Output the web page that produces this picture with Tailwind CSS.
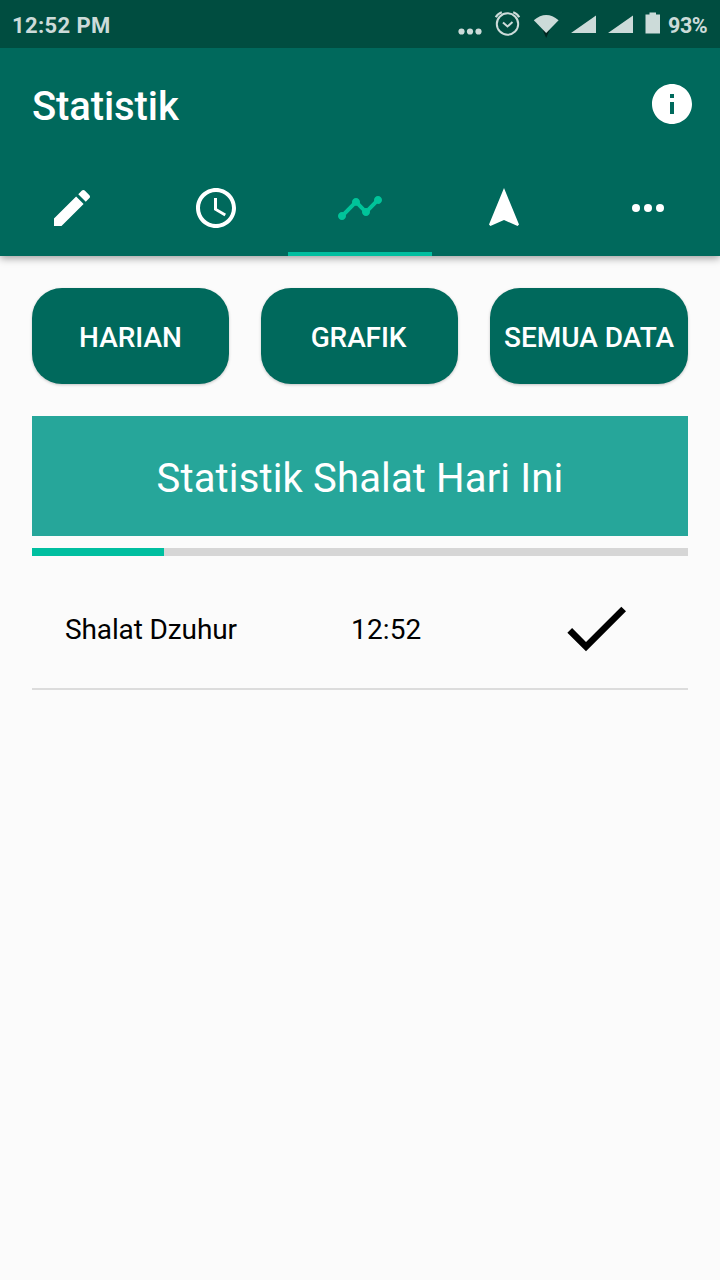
<!DOCTYPE html>
<html lang="id">
<head>
<meta charset="utf-8">
<title>Statistik</title>
<script src="https://cdn.jsdelivr.net/npm/@tailwindcss/browser@4"></script>
</head>
<body class="flex h-[1280px] w-[720px] flex-col overflow-hidden bg-[#fbfbfb] font-[Roboto,sans-serif] text-black">
  <header class="flex h-64 shrink-0 flex-col bg-[#00695c] text-white shadow-[0_2px_8px_rgba(0,0,0,0.4)]">
    <div class="flex h-12 items-center justify-between bg-[#004d40] pr-3 pl-3 text-[22px] text-[#ccdbd9]">
      <span class="pt-[3px] leading-none font-bold tracking-[0.38px]">12:52 PM</span>
      <div class="flex items-center">
        <svg class="h-12 w-[210px]" viewBox="456 0 210 48" fill="#ccdbd9">
          <circle cx="461.500" cy="31.500" r="3.100"/><circle cx="470" cy="31.500" r="3.100"/><circle cx="478.500" cy="31.500" r="3.100"/>
          <g fill="none" stroke="#ccdbd9">
            <circle cx="507.500" cy="24" r="10.700" stroke-width="2"/>
            <path d="M503 22.500l4.500 4 5-4.500" stroke-width="2"/>
            <path d="M495.800 17.200q1.800-3.600 6-5M519.200 17.200q-1.800-3.600-6-5" stroke-width="2.200"/>
          </g>
          <path d="M542.700 30h7l-3.500 8z" fill="#00261f"/>
          <path d="M533.800 20.300q12.400-10.600 24.800 0L546.200 33z"/>
          <path d="M571 33l25-17.500V33zM608 33l25-17.500V33z"/>
          <path d="M649.500 12.500h6.500v2h4v19h-14.500v-19h4z"/>
        </svg>
        <span class="w-[42px] pt-[3px] pl-0.5 text-[21.500px] leading-none font-bold tracking-[-0.4px]">93%</span>
      </div>
    </div>
    <div class="flex h-28 items-center justify-between pr-6 pl-8">
      <h1 class="pt-[5px] text-[40px] leading-none font-medium tracking-[-0.1px]">Statistik</h1>
      <svg class="size-12" viewBox="0 0 24 24" fill="currentColor"><path d="M12 2C6.480 2 2 6.480 2 12s4.480 10 10 10 10-4.480 10-10S17.520 2 12 2zm1 15h-2v-6h2v6zm0-8h-2V7h2v2z"/></svg>
    </div>
    <nav class="grid h-24 grid-cols-5">
      <div class="flex items-center justify-center"><svg class="size-12" viewBox="0 0 24 24" fill="currentColor"><path d="M3 17.250V21h3.750L17.810 9.940l-3.750-3.750L3 17.250zM20.710 7.040c.39-.39.39-1.020 0-1.410l-2.340-2.340c-.39-.39-1.020-.39-1.410 0l-1.830 1.830 3.750 3.750 1.830-1.830z"/></svg></div>
      <div class="flex items-center justify-center"><svg class="size-12" viewBox="0 0 24 24" fill="currentColor"><path d="M11.990 2C6.470 2 2 6.480 2 12s4.470 10 9.990 10C17.520 22 22 17.520 22 12S17.520 2 11.990 2zM12 20c-4.420 0-8-3.580-8-8s3.580-8 8-8 8 3.580 8 8-3.580 8-8 8zm.5-13H11v6l5.250 3.150.75-1.230-4.500-2.670z"/></svg></div>
      <div class="flex items-center justify-center border-b-4 border-[#00bfa0] pt-1 text-[#00c49a]"><svg class="size-12" viewBox="0 0 24 24" fill="currentColor"><path d="M23 8c0 1.100-.9 2-2 2-.18 0-.35-.02-.51-.07l-3.560 3.550c.05.16.07.34.07.52 0 1.100-.9 2-2 2s-2-.9-2-2c0-.18.02-.36.07-.52l-2.550-2.550c-.16.05-.34.07-.52.07s-.36-.02-.52-.07l-4.550 4.560c.05.16.07.33.07.51 0 1.100-.9 2-2 2s-2-.9-2-2 .9-2 2-2c.18 0 .35.02.51.07l4.560-4.550C8.020 9.360 8 9.180 8 9c0-1.100.9-2 2-2s2 .9 2 2c0 .18-.02.36-.07.52l2.550 2.550c.16-.05.34-.07.52-.07s.36.02.52.07l3.550-3.560C19.020 8.350 19 8.180 19 8c0-1.100.9-2 2-2s2 .9 2 2z"/></svg></div>
      <div class="flex items-center justify-center"><svg class="size-12" viewBox="0 0 24 24" fill="currentColor"><path d="M12 2L4.500 20.290l.71.71L12 18l6.790 3 .71-.71z"/></svg></div>
      <div class="flex items-center justify-center"><svg class="size-12" viewBox="0 0 24 24" fill="currentColor"><circle cx="6" cy="12" r="2"/><circle cx="12" cy="12" r="2"/><circle cx="18" cy="12" r="2"/></svg></div>
    </nav>
  </header>
  <main class="flex flex-col px-8 pt-8">
    <div class="flex gap-8 text-[28px] leading-none font-medium text-white">
      <button class="h-24 w-[197px] rounded-[30px] bg-[#00695c] pt-1 whitespace-nowrap shadow-[0_1px_3px_rgba(0,0,0,0.22)]">HARIAN</button>
      <button class="h-24 w-[197px] rounded-[30px] bg-[#00695c] pt-1 pr-0.5 tracking-[-0.1px] whitespace-nowrap shadow-[0_1px_3px_rgba(0,0,0,0.22)]">GRAFIK</button>
      <button class="h-24 w-[198px] rounded-[30px] bg-[#00695c] pt-1 whitespace-nowrap shadow-[0_1px_3px_rgba(0,0,0,0.22)]">SEMUA DATA</button>
    </div>
    <h2 class="mt-8 flex h-[120px] items-center justify-center bg-[#26a69a] pt-1.5 text-[40px] leading-none tracking-[0.14px] text-white">Statistik Shalat Hari Ini</h2>
    <div class="mt-3 h-2 bg-[#d6d6d6]"><div class="h-full w-[132px] bg-[#00bfa0]"></div></div>
    <div class="mt-6 flex h-[110px] items-center border-b-2 border-[#dcdcdc] pl-[33px] text-[28px] leading-none">
      <span class="w-[286px] pb-2 tracking-[-0.12px]">Shalat Dzuhur</span>
      <span class="w-[205px] pb-2 tracking-[0.15px]">12:52</span>
      <svg class="mb-3 size-20" viewBox="0 0 24 24"><path d="M9 16.170L4.830 12l-1.420 1.410L9 19 21 7l-1.410-1.410z"/></svg>
    </div>
  </main>
</body>
</html>
